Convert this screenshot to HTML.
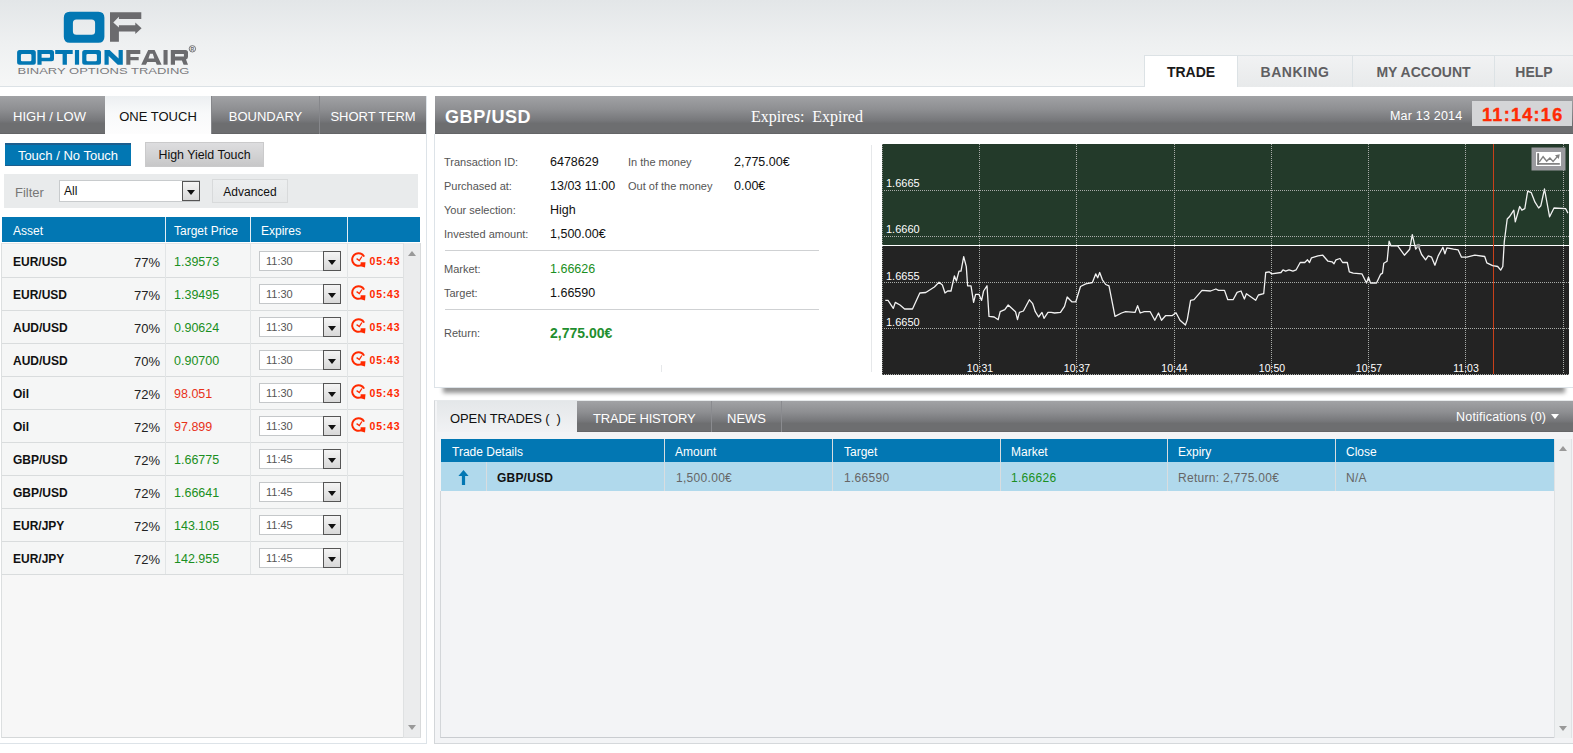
<!DOCTYPE html>
<html><head><meta charset="utf-8">
<style>
*{margin:0;padding:0;box-sizing:border-box}
html,body{width:1573px;height:753px;overflow:hidden;background:#fff;font-family:"Liberation Sans",sans-serif;position:relative}
.a{position:absolute;white-space:nowrap}
#hdr{left:0;top:0;width:1573px;height:87px;background:linear-gradient(#e3e6e8,#eef0f1 50%,#f6f7f7 100%);border-bottom:1px solid #dce2e6}
.nav{top:55px;height:32px;border:1px solid #dce2e5;border-bottom:none;background:linear-gradient(#f1f2f3,#e8eaeb);color:#5f5f62;font-weight:bold;font-size:14px;text-align:center;line-height:32px}
.nav.on{background:#fff;color:#1a1a1a}
.ltab{top:96px;height:38px;background:linear-gradient(#a1a2a5,#8e8f92 35%,#76777a 65%,#6d6e70 72%,#6d6e70 96%,#5f6062);color:#fff;font-size:13px;text-align:center;line-height:41px}
.ltab.on{background:linear-gradient(#eceff1,#f8f9fa 45%,#fdfdfd);color:#111}
.dark{background:linear-gradient(#a1a2a5,#8e8f92 35%,#76777a 65%,#6d6e70 72%,#6d6e70 96%,#5f6062)}
.row{left:2px;width:401px;height:33px;border-bottom:1px solid #d9dcdd;background:#f5f6f6}
.row .asset{left:11px;top:10px;font-weight:bold;font-size:12px;color:#111}
.row .pct{left:132px;top:10px;font-size:13px;color:#222}
.row .price{left:172px;top:10px;font-size:12.5px}
.sel{left:257px;top:6px;width:82px;height:20px;border:1px solid #c5c8ca;background:#fff}
.sel span{position:absolute;left:6px;top:3px;font-size:11px;color:#555}
.sel i{position:absolute;right:-1px;top:-1px;width:18px;height:20px;border:1px solid #555;background:linear-gradient(#f4f4f4,#d8d8d8)}
.sel i:after{content:"";position:absolute;left:4px;top:8px;border-left:4px solid transparent;border-right:4px solid transparent;border-top:5px solid #111}
.tm{left:367.5px;top:10px;font-weight:bold;font-size:10.5px;letter-spacing:0.8px;color:#ff2a00}
.lbl{font-size:11px;color:#555;margin-top:1px}
.val{font-size:12.5px;color:#111;margin-top:1px}
.th{font-size:12px;color:#fff;margin-top:1px}
.gl{position:absolute;background:#fff}
</style></head><body>
<div id="hdr" class="a"></div>
<!-- logo -->
<svg class="a" style="left:0;top:0" width="220" height="86" viewBox="0 0 220 86">
  <path fill="#0277b3" fill-rule="evenodd" d="M69.8,11.8 H98.4 Q104.4,11.8 104.4,17.8 V36.8 Q104.4,42.8 98.4,42.8 H69.8 Q63.8,42.8 63.8,36.8 V17.8 Q63.8,11.8 69.8,11.8 Z M76.4,19.6 H91.6 Q95.1,19.6 95.1,23.1 V31.3 Q95.1,34.8 91.6,34.8 H76.4 Q72.9,34.8 72.9,31.3 V23.1 Q72.9,19.6 76.4,19.6 Z"/>
  <path fill="#6b6b6e" d="M110,12.3 H141.3 V19.1 H118.9 V16.8 L113.3,22.4 L118.9,27.6 V25.2 H135.3 V22.6 L141.6,28.2 L135.3,34 V31.5 H118.9 V41.8 H110 Z"/>
  <g fill="#0277b3" fill-rule="evenodd">
    <path d="M19.6,50 H33.3 Q35.8,50 35.8,52.5 V62.2 Q35.8,64.7 33.3,64.7 H19.6 Q17.1,64.7 17.1,62.2 V52.5 Q17.1,50 19.6,50 Z M22.2,53.9 H30.1 Q31.4,53.9 31.4,55.2 V59.9 Q31.4,61.2 30.1,61.2 H22.2 Q20.9,61.2 20.9,59.9 V55.2 Q20.9,53.9 22.2,53.9 Z"/>
    <path d="M37.4,50 H51.5 Q54,50 54,52.5 V58.7 Q54,61.2 51.5,61.2 H41.6 V64.7 H37.4 Z M41.6,53.9 H49.2 Q50.1,53.9 50.1,54.8 V56.8 Q50.1,57.7 49.2,57.7 H41.6 Z"/>
    <path d="M55.2,50 H72.7 V53.9 H66.9 V64.7 H62.6 V53.9 H55.2 Z"/>
    <path d="M74.9,50 H79.1 V64.7 H74.9 Z"/>
    <path d="M84.7,50 H98.5 Q101,50 101,52.5 V62.2 Q101,64.7 98.5,64.7 H84.7 Q82.2,64.7 82.2,62.2 V52.5 Q82.2,50 84.7,50 Z M87.7,53.9 H95.6 Q96.9,53.9 96.9,55.2 V59.9 Q96.9,61.2 95.6,61.2 H87.7 Q86.4,61.2 86.4,59.9 V55.2 Q86.4,53.9 87.7,53.9 Z"/>
    <path d="M104.5,50 H109.6 L118.6,58.6 V50 H122.8 V64.7 H117.7 L108.7,56.1 V64.7 H104.5 Z"/>
  </g>
  <g fill="#6b6b6e" fill-rule="evenodd">
    <path d="M126.3,50 H140.3 V53.9 H130.4 V57 H138.7 V60.2 H130.4 V64.7 H126.3 Z"/>
    <path d="M148.2,50 H154.6 L161.6,64.7 H156.8 L155.6,61.9 H147.2 L146,64.7 H141.2 Z M150,53.8 H152.8 L154.3,58.6 H148.5 Z"/>
    <path d="M163.5,50 H167.6 V64.7 H163.5 Z"/>
    <path d="M170.8,50 H185.5 Q188,50 188,52.5 V56.8 Q188,59 186,59.4 L188,64.7 H183.6 L181.9,60.4 H175 V64.7 H170.8 Z M175,53.9 H183.9 V56.6 H175 Z"/>
    <circle cx="192.4" cy="48.8" r="3.2" fill="none" stroke="#6b6b6e" stroke-width="0.9"/>
  </g>
  <text x="192.4" y="50.6" text-anchor="middle" font-family="Liberation Sans" font-weight="bold" font-size="5" fill="#6b6b6e">R</text>
  <text x="17.5" y="74.2" font-family="Liberation Sans" font-size="9.8" fill="#7b7b7e" textLength="172" lengthAdjust="spacingAndGlyphs">BINARY OPTIONS TRADING</text>
</svg>
<div class="a nav on" style="left:1144px;width:94px">TRADE</div>
<div class="a nav" style="left:1237px;width:116px;letter-spacing:0.5px">BANKING</div>
<div class="a nav" style="left:1352px;width:143px">MY ACCOUNT</div>
<div class="a nav" style="left:1494px;width:79px;border-right:none">HELP</div>

<!-- LEFT PANEL -->
<div class="a" style="left:0;top:96px;width:427px;height:648px;border-right:1px solid #dde3e8;border-bottom:1px solid #dde3e8"></div>
<div class="a ltab" style="left:0;width:105px;padding-right:6px">HIGH / LOW</div>
<div class="a ltab on" style="left:105px;width:106px">ONE TOUCH</div>
<div class="a ltab" style="left:211px;width:108px;border-left:1px solid #86878b">BOUNDARY</div>
<div class="a ltab" style="left:319px;width:107px;border-left:1px solid #86878b">SHORT TERM</div>

<div class="a" style="left:5px;top:143px;width:126px;height:23px;background:#0277b3;border-top:2px solid #1d5e8e;border-bottom:1px solid #1d5e8e;color:#fff;font-size:13px;text-align:center;line-height:21px">Touch / No Touch</div>
<div class="a" style="left:145px;top:142px;width:119px;height:25px;background:linear-gradient(#dddddf,#d2d2d3 55%,#c7c7c8);border:1px solid #cacacb;color:#111;font-size:12.4px;text-align:center;line-height:25px">High Yield Touch</div>

<div class="a" style="left:4px;top:174px;width:414px;height:34px;background:#e9ebec"></div>
<span class="a" style="left:15px;top:185px;font-size:13px;color:#777">Filter</span>
<div class="a" style="left:59px;top:180px;width:141px;height:22px;background:#fff;border:1px solid #c8cbcd"></div>
<span class="a" style="left:64px;top:184px;font-size:12px;color:#111">All</span>
<div class="a sel" style="left:0;top:0;border:none;width:0;height:0"><i style="left:182px;top:181px;right:auto;height:20px"></i></div>
<div class="a" style="left:212px;top:179px;width:76px;height:24px;background:linear-gradient(#eceeef,#e6e8e9);border:1px solid #d8dadb;color:#111;font-size:12px;text-align:center;line-height:25px">Advanced</div>

<div class="a" style="left:2px;top:217px;width:418px;height:25px;background:#0277b3"></div>
<div class="a" style="left:165px;top:217px;width:1px;height:25px;background:#e4eef4"></div>
<div class="a" style="left:250px;top:217px;width:1px;height:25px;background:#e4eef4"></div>
<div class="a" style="left:347px;top:217px;width:1px;height:25px;background:#e4eef4"></div>
<span class="a th" style="left:13px;top:223px">Asset</span>
<span class="a th" style="left:174px;top:223px">Target Price</span>
<span class="a th" style="left:261px;top:223px">Expires</span>

<div class="a" style="left:1px;top:243px;width:402px;height:495px;background:#f7f7f7;border-left:1px solid #dfe2e3;border-bottom:1px solid #d5d8d9"></div>
<div class="a" style="left:403px;top:243px;width:18px;height:495px;background:#ebeced;border-left:1px solid #dfe1e2;border-right:1px solid #d8dadb;border-bottom:1px solid #dfe1e2"></div>
<div class="a" style="left:408px;top:251px;border-left:4px solid transparent;border-right:4px solid transparent;border-bottom:5px solid #999"></div>
<div class="a" style="left:408px;top:725px;border-left:4px solid transparent;border-right:4px solid transparent;border-top:5px solid #999"></div>
<div class="a row" style="top:245px"><span class="a asset">EUR/USD</span><span class="a pct">77%</span><span class="a price" style="color:#1a8f22">1.39573</span><div class="a sel"><span>11:30</span><i></i></div><svg class="a" style="left:347px;top:5px" width="18" height="18" viewBox="-0.4 -0.3 18 18"><path d="M14.7,6.34 A6.3,6.3 0 1 0 11.8,14.9" fill="none" stroke="#ff2a00" stroke-width="2"/><path d="M11.2,12 L16.1,11.9 L15.6,17.2 L11.2,16 Z" fill="#ff2a00"/><path d="M7.2,8.3 L9.9,10.2 L12.5,6.2" fill="none" stroke="#ff2a00" stroke-width="1.3"/></svg><span class="a tm">05:43</span></div>
<div class="a row" style="top:278px"><span class="a asset">EUR/USD</span><span class="a pct">77%</span><span class="a price" style="color:#1a8f22">1.39495</span><div class="a sel"><span>11:30</span><i></i></div><svg class="a" style="left:347px;top:5px" width="18" height="18" viewBox="-0.4 -0.3 18 18"><path d="M14.7,6.34 A6.3,6.3 0 1 0 11.8,14.9" fill="none" stroke="#ff2a00" stroke-width="2"/><path d="M11.2,12 L16.1,11.9 L15.6,17.2 L11.2,16 Z" fill="#ff2a00"/><path d="M7.2,8.3 L9.9,10.2 L12.5,6.2" fill="none" stroke="#ff2a00" stroke-width="1.3"/></svg><span class="a tm">05:43</span></div>
<div class="a row" style="top:311px"><span class="a asset">AUD/USD</span><span class="a pct">70%</span><span class="a price" style="color:#1a8f22">0.90624</span><div class="a sel"><span>11:30</span><i></i></div><svg class="a" style="left:347px;top:5px" width="18" height="18" viewBox="-0.4 -0.3 18 18"><path d="M14.7,6.34 A6.3,6.3 0 1 0 11.8,14.9" fill="none" stroke="#ff2a00" stroke-width="2"/><path d="M11.2,12 L16.1,11.9 L15.6,17.2 L11.2,16 Z" fill="#ff2a00"/><path d="M7.2,8.3 L9.9,10.2 L12.5,6.2" fill="none" stroke="#ff2a00" stroke-width="1.3"/></svg><span class="a tm">05:43</span></div>
<div class="a row" style="top:344px"><span class="a asset">AUD/USD</span><span class="a pct">70%</span><span class="a price" style="color:#1a8f22">0.90700</span><div class="a sel"><span>11:30</span><i></i></div><svg class="a" style="left:347px;top:5px" width="18" height="18" viewBox="-0.4 -0.3 18 18"><path d="M14.7,6.34 A6.3,6.3 0 1 0 11.8,14.9" fill="none" stroke="#ff2a00" stroke-width="2"/><path d="M11.2,12 L16.1,11.9 L15.6,17.2 L11.2,16 Z" fill="#ff2a00"/><path d="M7.2,8.3 L9.9,10.2 L12.5,6.2" fill="none" stroke="#ff2a00" stroke-width="1.3"/></svg><span class="a tm">05:43</span></div>
<div class="a row" style="top:377px"><span class="a asset">Oil</span><span class="a pct">72%</span><span class="a price" style="color:#e8321a">98.051</span><div class="a sel"><span>11:30</span><i></i></div><svg class="a" style="left:347px;top:5px" width="18" height="18" viewBox="-0.4 -0.3 18 18"><path d="M14.7,6.34 A6.3,6.3 0 1 0 11.8,14.9" fill="none" stroke="#ff2a00" stroke-width="2"/><path d="M11.2,12 L16.1,11.9 L15.6,17.2 L11.2,16 Z" fill="#ff2a00"/><path d="M7.2,8.3 L9.9,10.2 L12.5,6.2" fill="none" stroke="#ff2a00" stroke-width="1.3"/></svg><span class="a tm">05:43</span></div>
<div class="a row" style="top:410px"><span class="a asset">Oil</span><span class="a pct">72%</span><span class="a price" style="color:#e8321a">97.899</span><div class="a sel"><span>11:30</span><i></i></div><svg class="a" style="left:347px;top:5px" width="18" height="18" viewBox="-0.4 -0.3 18 18"><path d="M14.7,6.34 A6.3,6.3 0 1 0 11.8,14.9" fill="none" stroke="#ff2a00" stroke-width="2"/><path d="M11.2,12 L16.1,11.9 L15.6,17.2 L11.2,16 Z" fill="#ff2a00"/><path d="M7.2,8.3 L9.9,10.2 L12.5,6.2" fill="none" stroke="#ff2a00" stroke-width="1.3"/></svg><span class="a tm">05:43</span></div>
<div class="a row" style="top:443px"><span class="a asset">GBP/USD</span><span class="a pct">72%</span><span class="a price" style="color:#1a8f22">1.66775</span><div class="a sel"><span>11:45</span><i></i></div></div>
<div class="a row" style="top:476px"><span class="a asset">GBP/USD</span><span class="a pct">72%</span><span class="a price" style="color:#1a8f22">1.66641</span><div class="a sel"><span>11:45</span><i></i></div></div>
<div class="a row" style="top:509px"><span class="a asset">EUR/JPY</span><span class="a pct">72%</span><span class="a price" style="color:#1a8f22">143.105</span><div class="a sel"><span>11:45</span><i></i></div></div>
<div class="a row" style="top:542px"><span class="a asset">EUR/JPY</span><span class="a pct">72%</span><span class="a price" style="color:#1a8f22">142.955</span><div class="a sel"><span>11:45</span><i></i></div></div>
<div class="a" style="left:1px;top:243px;width:1px;height:495px;background:#dcdfe0"></div>
<div class="a" style="left:2px;top:243px;width:401px;height:1px;background:#e3e5e6"></div>
<div class="a" style="left:165px;top:243px;width:1px;height:331px;background:#e2e5e6"></div>
<div class="a" style="left:250px;top:243px;width:1px;height:331px;background:#e2e5e6"></div>
<div class="a" style="left:347px;top:243px;width:1px;height:331px;background:#e2e5e6"></div>

<!-- RIGHT PANEL -->
<div class="a dark" style="left:435px;top:96px;width:1138px;height:38px"></div>
<span class="a" style="left:445px;top:107px;font-size:18px;font-weight:bold;color:#fff;letter-spacing:0.6px">GBP/USD</span>
<span class="a" style="left:751px;top:108px;font-size:16px;font-family:'Liberation Serif',serif;color:#fff;white-space:pre">Expires:  Expired</span>
<span class="a" style="left:1390px;top:108.5px;font-size:12.5px;color:#fff;letter-spacing:0.2px">Mar 13 2014</span>
<div class="a" style="left:1472px;top:101px;width:100px;height:25px;background:#d4d5d7"></div><span class="a" style="left:1482px;top:102px;color:#ff2b05;font-weight:bold;font-size:18px;line-height:26px;letter-spacing:1.3px;-webkit-text-stroke:0.4px #ff2b05">11:14:16</span>

<div class="a" style="left:443px;top:384px;width:1122px;height:9px;background:rgba(0,0,0,.42);filter:blur(2.2px)"></div>
<div class="a" style="left:434px;top:134px;width:1139px;height:254px;background:#fff;border-left:1px solid #dde3e8;border-bottom:1px solid #dde3e8"></div>
<div class="a" style="left:871px;top:145px;width:1px;height:227px;background:#e6e8ea"></div>
<div class="a" style="left:661px;top:365px;width:1px;height:7px;background:#e6e8ea"></div>

<span class="a lbl" style="left:444px;top:155px">Transaction ID:</span>
<span class="a lbl" style="left:444px;top:179px">Purchased at:</span>
<span class="a lbl" style="left:444px;top:203px">Your selection:</span>
<span class="a lbl" style="left:444px;top:227px">Invested amount:</span>
<span class="a lbl" style="left:444px;top:262px">Market:</span>
<span class="a lbl" style="left:444px;top:286px">Target:</span>
<span class="a lbl" style="left:444px;top:326px">Return:</span>
<span class="a val" style="left:550px;top:154px">6478629</span>
<span class="a val" style="left:550px;top:178px">13/03 11:00</span>
<span class="a val" style="left:550px;top:202px">High</span>
<span class="a val" style="left:550px;top:226px">1,500.00€</span>
<span class="a val" style="left:550px;top:261px;color:#1a8f22">1.66626</span>
<span class="a val" style="left:550px;top:285px">1.66590</span>
<span class="a val" style="left:550px;top:324px;color:#1f8f2f;font-weight:bold;font-size:14px">2,775.00€</span>
<span class="a lbl" style="left:628px;top:155px">In the money</span>
<span class="a lbl" style="left:628px;top:179px">Out of the money</span>
<span class="a val" style="left:734px;top:154px">2,775.00€</span>
<span class="a val" style="left:734px;top:178px">0.00€</span>
<div class="a" style="left:445px;top:250px;width:374px;height:1px;background:#cfd1d3"></div>
<div class="a" style="left:445px;top:309px;width:374px;height:1px;background:#cfd1d3"></div>

<!-- CHART -->
<svg class="a" style="left:882px;top:144px" width="687" height="231" viewBox="0 0 687 231">
  <rect x="0" y="0" width="687" height="231" fill="#232323"/>
  <rect x="0" y="0" width="687" height="101" fill="#233a2a"/>
  <g stroke="#a9aca9" stroke-width="1" stroke-dasharray="1,1" fill="none">
    <path d="M0,46.5 H687 M0,92.5 H687 M0,138.5 H687 M0,184.5 H687 M0,230.5 H687"/>
    <path d="M0.5,0 V231" stroke="#8a8d8a"/>
    <path d="M97.5,0 V230 M194.5,0 V230 M292.5,0 V230 M389.5,0 V230 M486.5,0 V230 M583.5,0 V230 M681.5,0 V230"/>
  </g>
  <rect x="0" y="101" width="687" height="1" fill="#fff"/>
  <rect x="611" y="0" width="1" height="230" fill="#c8401a"/>
  <path d="M3.3,156.4 L6.0,156.4 L11.3,164.4 L13.3,158.4 L18.0,161.0 L22.6,165.0 L30.5,165.0 L37.8,149.0 L43.8,148.5 L52.4,143.0 L57.0,138.2 L60.4,141.0 L63.0,149.0 L65.7,147.0 L69.0,147.0 L72.4,132.0 L74.4,137.0 L77.0,127.2 L79.0,127.2 L81.7,112.6 L84.3,122.6 L85.6,141.8 L89.0,141.8 L91.6,158.4 L93.6,150.4 L97.0,150.4 L99.6,156.4 L101.6,147.0 L105.0,141.8 L107.0,172.4 L112.2,173.0 L116.2,175.7 L118.2,167.7 L122.8,165.7 L126.2,161.0 L133.5,167.7 L135.5,175.7 L137.4,168.4 L141.4,167.0 L147.4,155.8 L150.7,159.7 L153.3,167.7 L156.6,173.0 L160.0,168.4 L162.0,174.4 L166.0,168.4 L169.2,168.4 L172.6,169.0 L178.5,168.4 L182.5,162.4 L185.2,153.0 L187.8,155.8 L189.8,157.8 L193.8,157.8 L198.5,142.5 L203.8,139.8 L210.4,138.5 L213.7,129.9 L215.7,133.8 L217.7,128.5 L220.4,135.8 L223.7,140.5 L227.0,141.8 L233.0,172.4 L239.6,169.0 L243.6,167.7 L253.0,168.4 L255.6,161.7 L258.2,169.0 L262.2,167.7 L268.2,167.7 L272.8,176.3 L276.5,169.0 L279.5,176.3 L283.5,171.7 L290.0,171.7 L294.0,168.8 L298.0,176.3 L303.4,181.0 L305.3,175.6 L308.6,156.3 L312.0,155.7 L320.0,146.4 L328.5,147.0 L333.9,145.0 L336.5,146.4 L342.5,146.4 L345.8,155.7 L351.1,155.7 L355.1,148.4 L359.0,147.0 L362.4,155.0 L364.4,149.7 L373.7,156.3 L376.4,151.0 L381.7,149.7 L383.7,128.5 L387.0,127.8 L389.6,129.8 L399.0,128.5 L401.0,125.8 L403.6,127.1 L407.0,125.8 L410.9,127.1 L414.2,125.8 L418.2,118.5 L422.8,118.5 L425.5,115.8 L427.5,118.5 L429.5,113.8 L436.0,111.9 L440.8,111.2 L446.0,117.2 L450.0,117.8 L452.0,119.8 L454.0,115.8 L458.0,114.5 L460.6,118.5 L465.3,118.5 L467.3,127.8 L471.2,129.1 L479.9,129.8 L484.5,139.0 L486.5,133.1 L488.5,139.0 L494.5,139.0 L498.5,130.4 L500.5,129.1 L501.8,119.2 L505.1,117.2 L507.1,97.2 L509.1,101.9 L515.7,101.9 L522.4,111.2 L527.7,105.2 L530.3,90.6 L533.7,105.2 L536.3,101.9 L539.6,110.5 L543.6,115.8 L546.3,111.9 L549.6,113.2 L552.9,121.2 L556.2,111.9 L560.9,103.2 L562.9,109.9 L564.9,103.9 L571.5,105.2 L576.2,105.9 L579.5,113.2 L584.8,113.2 L592.8,111.2 L602.7,112.5 L604.8,118.8 L610.6,121.7 L615.7,122.5 L618.7,126.1 L620.8,122.5 L622.3,97.6 L625.2,75.0 L627.4,72.8 L631.8,66.2 L633.3,77.9 L637.7,62.5 L639.9,66.2 L642.8,64.7 L645.7,47.2 L649.3,48.7 L653.0,58.2 L656.7,64.0 L658.8,61.8 L662.5,45.0 L667.6,72.8 L672.0,64.0 L683.7,64.7 L685.9,69.1" fill="none" stroke="#f2f2f2" stroke-width="1.3" stroke-linejoin="round"/>
  <circle cx="536.3" cy="101.9" r="2.2" fill="#999"/>
  <g font-family="Liberation Sans" font-size="11" fill="#fff">
    <text x="4" y="43">1.6665</text>
    <text x="4" y="89">1.6660</text>
    <text x="4" y="136">1.6655</text>
    <text x="4" y="182">1.6650</text>
    <g text-anchor="middle"><text x="98" y="228" font-size="10.5">10:31</text><text x="195" y="228" font-size="10.5">10:37</text><text x="292.5" y="228" font-size="10.5">10:44</text><text x="390" y="228" font-size="10.5">10:50</text><text x="487" y="228" font-size="10.5">10:57</text><text x="584" y="228" font-size="10.5">11:03</text></g>
  </g>
  <rect x="649.5" y="3.5" width="34" height="23" fill="#9a9a9e"/>
  <rect x="654" y="8" width="25" height="14" fill="#fff"/>
  <rect x="655.2" y="9.2" width="1.9" height="11.5" fill="#777"/>
  <rect x="655.2" y="19.1" width="22.6" height="1.6" fill="#777"/>
  <path d="M657.3,17.9 L661.1,12.7 L664.7,17.1 L667.9,14 L671.1,17.5 L675.5,12.4" fill="none" stroke="#808080" stroke-width="1.4"/>
  <path d="M673,11.3 L677.8,10.3 L676.8,15 Z" fill="#808080"/>
</svg>

<!-- BOTTOM -->
<div class="a" style="left:434px;top:400px;width:1139px;height:344px;background:#f3f4f6;border-left:1px solid #d3d6d9;border-bottom:1px solid #d5d8db;border-top:1px solid #e6e9eb"></div>
<div class="a dark" style="left:577px;top:401px;width:996px;height:31px"></div>
<div class="a" style="left:437px;top:401px;width:140px;height:31px;background:linear-gradient(#e4e7e9,#f1f2f4)"></div>
<span class="a" style="left:450px;top:411px;font-size:13px;color:#111;letter-spacing:-0.1px">OPEN TRADES (&nbsp;&nbsp;)</span>
<span class="a" style="left:593px;top:411px;font-size:13px;color:#fff;letter-spacing:-0.2px">TRADE HISTORY</span>
<span class="a" style="left:727px;top:411px;font-size:13px;color:#fff">NEWS</span>
<div class="a" style="left:711px;top:401px;width:1px;height:31px;background:#8a8b8f"></div>
<div class="a" style="left:781px;top:401px;width:1px;height:31px;background:#8a8b8f"></div>
<span class="a" style="left:1456px;top:410px;font-size:12.5px;color:#fff;letter-spacing:0.2px">Notifications (0)</span>
<div class="a" style="left:1551px;top:414px;border-left:4px solid transparent;border-right:4px solid transparent;border-top:5px solid #fff"></div>

<div class="a" style="left:441px;top:439px;width:1113px;height:23px;background:#0277b3"></div>
<div class="a" style="left:441px;top:462px;width:1113px;height:29px;background:#b0d9ec"></div>
<div class="a" style="left:440px;top:491px;width:1114px;height:247px;border-left:1px solid #d3d6d9;border-bottom:1px solid #c9ccd0"></div>
<div class="a" style="left:1554px;top:439px;width:18px;height:299px;background:#eef0f1;border-left:1px solid #dfe2e4;border-right:1px solid #dfe2e4"></div>
<div class="a" style="left:1559px;top:446px;border-left:4px solid transparent;border-right:4px solid transparent;border-bottom:5px solid #999"></div>
<div class="a" style="left:1559px;top:726px;border-left:4px solid transparent;border-right:4px solid transparent;border-top:5px solid #999"></div>
<div class="a" style="left:664px;top:439px;width:1px;height:52px;background:#d8dde0"></div>
<div class="a" style="left:832px;top:439px;width:1px;height:52px;background:#d8dde0"></div>
<div class="a" style="left:1000px;top:439px;width:1px;height:52px;background:#d8dde0"></div>
<div class="a" style="left:1167px;top:439px;width:1px;height:52px;background:#d8dde0"></div>
<div class="a" style="left:1335px;top:439px;width:1px;height:52px;background:#d8dde0"></div>
<div class="a" style="left:486px;top:462px;width:1px;height:29px;background:#d8dde0"></div>
<span class="a th" style="left:452px;top:444px">Trade Details</span>
<span class="a th" style="left:675px;top:444px">Amount</span>
<span class="a th" style="left:844px;top:444px">Target</span>
<span class="a th" style="left:1011px;top:444px">Market</span>
<span class="a th" style="left:1178px;top:444px">Expiry</span>
<span class="a th" style="left:1346px;top:444px">Close</span>
<svg class="a" style="left:457px;top:469px" width="14" height="17" viewBox="0 0 14 17"><path d="M6.5,1 L11.6,7 H8.1 V16 H4.9 V7 H1.4 Z" fill="#0277b3"/></svg>
<span class="a" style="left:497px;top:471px;font-size:12px;font-weight:bold;color:#111;letter-spacing:0.2px">GBP/USD</span>
<span class="a" style="left:676px;top:471px;font-size:12px;color:#666;letter-spacing:0.3px">1,500.00€</span>
<span class="a" style="left:844px;top:471px;font-size:12px;color:#666;letter-spacing:0.3px">1.66590</span>
<span class="a" style="left:1011px;top:471px;font-size:12px;color:#1a8f22;letter-spacing:0.3px">1.66626</span>
<span class="a" style="left:1178px;top:471px;font-size:12px;color:#666;letter-spacing:0.3px">Return: 2,775.00€</span>
<span class="a" style="left:1346px;top:471px;font-size:12px;color:#666;letter-spacing:0.3px">N/A</span>
</body></html>
